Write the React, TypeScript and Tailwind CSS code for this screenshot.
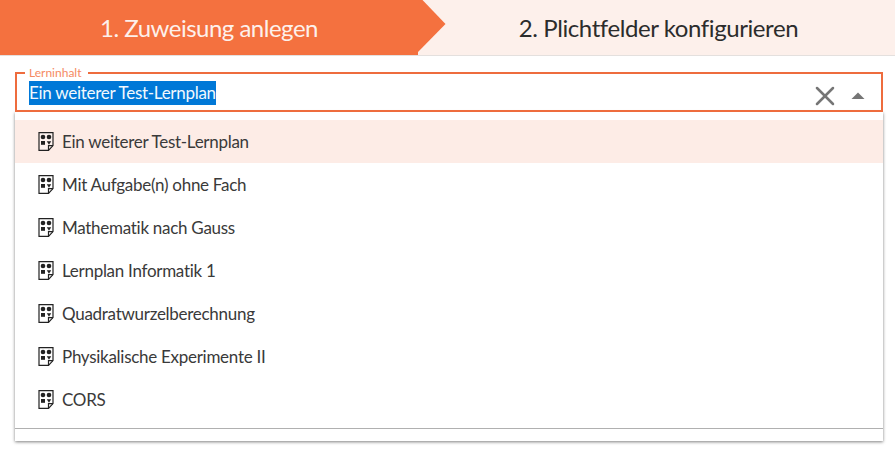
import { X } from 'lucide-react'

const items = [
  'Ein weiterer Test-Lernplan',
  'Mit Aufgabe(n) ohne Fach',
  'Mathematik nach Gauss',
  'Lernplan Informatik 1',
  'Quadratwurzelberechnung',
  'Physikalische Experimente II',
  'CORS',
]

function PlanIcon() {
  return (
    <svg width="16" height="19" viewBox="0 0 16 19" className="shrink-0">
      <path d="M1 .6h14v13l-4.5 4.8H1z" fill="#fff" fillOpacity="0.4" stroke="#222" strokeWidth="1.2" />
      <path d="M15 13.6h-4.5v4.8" fill="none" stroke="#222" strokeWidth="1.2" />
      <circle cx="5" cy="5" r="2.3" fill="#222" />
      <circle cx="11" cy="5" r="2.3" fill="#222" />
      <rect x="3" y="9" width="4" height="3.8" fill="#222" />
      <path d="M8.8 9.2h4.4l-2.2 3.6z" fill="#222" />
    </svg>
  )
}

export default function App() {
  return (
    <div className="h-[455px] w-[895px] overflow-hidden bg-white font-['Lato',sans-serif] text-[#3a3a3a]">
      {/* Steps */}
      <div className="flex h-[56px] border-b border-[#e4e0de] bg-[#fdf0eb]">
        <div className="relative flex h-[55px] w-[418px] items-center justify-center bg-[#f4713f] text-[24px] tracking-[-0.5px] text-[#fdf0eb]">
          <span>1. Zuweisung anlegen</span>
          <svg width="28" height="55" viewBox="0 0 28 55" className="absolute left-[418px] top-0">
            <path d="M0 0H4.5L27.5 24L0 52Z" fill="#f4713f" />
          </svg>
        </div>
        <div className="flex flex-1 items-center justify-center pl-[4px] text-[24px] tracking-[-0.42px] text-[#2c2c2c]">
          <span>2. Plichtfelder konfigurieren</span>
        </div>
      </div>

      <div className="pl-[15px] pr-[12px] pt-[16px]">
        {/* Field */}
        <div className="relative flex h-[40px] items-center border-2 border-[#ee6c3e] pl-[12px] pr-[16px]">
          <span className="absolute -top-[8px] left-[8px] bg-white pl-[4px] pr-[6px] text-[12px] leading-[14px] text-[#f58a63]">
            Lerninhalt
          </span>
          <span className="mt-[2px] bg-[#0078d7] text-[17px] leading-[24px] tracking-[-0.28px] text-[#f2f8fd]">
            Ein weiterer Test-Lernplan
          </span>
          <div className="ml-auto mt-[7px] flex items-center gap-[10px]">
            <X size={32} strokeWidth={1.9} className="text-[#757575]" />
            <svg width="14" height="7" viewBox="0 0 14 7">
              <path d="M0.5 7L7 0.5L13.5 7Z" fill="#757575" />
            </svg>
          </div>
        </div>

        {/* Dropdown */}
        <div className="h-[329px] bg-white shadow-[0_1px_3px_rgba(0,0,0,0.5)]">
          <div className="h-[317px] border-b border-[#b0b0b0] pt-[8px]">
            {items.map((item, i) => (
              <div
                key={item}
                className={`flex h-[43px] items-center gap-[8px] pl-[23px] text-[17px] tracking-[-0.28px] ${i === 0 ? 'bg-[#fdece6]' : ''}`}
              >
                <PlanIcon />
                <span>{item}</span>
              </div>
            ))}
          </div>
        </div>
      </div>
    </div>
  )
}
